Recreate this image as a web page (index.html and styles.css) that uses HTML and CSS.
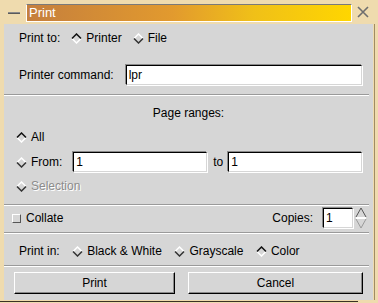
FILE: index.html
```html
<!DOCTYPE html>
<html lang="en">
<head>
    <meta charset="UTF-8">
    <title>Print</title>
    <link rel="stylesheet" href="styles.css">
</head>
<body>
    <div class="window">
        <div class="titlebar">
            <span class="min-btn"></span>
            <div class="title">Print</div>
            <svg class="close-btn" width="12" height="12" viewBox="0 0 12 12">
                <path d="M1 1 L11 11 M11 1 L1 11" stroke="#6e6e6e" stroke-width="1.6" fill="none"/>
            </svg>
        </div>

        <div class="content">
            <!-- destination -->
            <div class="sec sec-dest">
                <div class="row row-radios">
                    <span class="label">Print to:</span>
                    <span class="radio">
                        <svg class="dia" width="11" height="11" viewBox="0 0 11 11"><polyline points="1,5.5 5.5,10 10,5.5" stroke="#fff" stroke-width="1.5" fill="none"/><polyline points="1,5.5 5.5,1 10,5.5" stroke="#111" stroke-width="1.5" fill="none"/></svg>
                        Printer
                    </span>
                    <span class="radio">
                        <svg class="dia" width="11" height="11" viewBox="0 0 11 11"><polyline points="1,5.5 5.5,1 10,5.5" stroke="#fff" stroke-width="1.5" fill="none"/><polyline points="1,5.5 5.5,10 10,5.5" stroke="#333" stroke-width="1.5" fill="none"/></svg>
                        File
                    </span>
                </div>
                <div class="row row-cmd">
                    <span class="label">Printer command:</span>
                    <div class="entry grow">lpr</div>
                </div>
            </div>
            <div class="sep"></div>

            <!-- page ranges -->
            <div class="sec sec-range">
                <div class="row row-center">Page ranges:</div>
                <div class="row row-all">
                    <span class="radio">
                        <svg class="dia" width="11" height="11" viewBox="0 0 11 11"><polyline points="1,5.5 5.5,10 10,5.5" stroke="#fff" stroke-width="1.5" fill="none"/><polyline points="1,5.5 5.5,1 10,5.5" stroke="#111" stroke-width="1.5" fill="none"/></svg>
                        All
                    </span>
                </div>
                <div class="row row-from">
                    <span class="radio">
                        <svg class="dia" width="11" height="11" viewBox="0 0 11 11"><polyline points="1,5.5 5.5,1 10,5.5" stroke="#fff" stroke-width="1.5" fill="none"/><polyline points="1,5.5 5.5,10 10,5.5" stroke="#333" stroke-width="1.5" fill="none"/></svg>
                        From:
                    </span>
                    <div class="entry grow from-entry">1</div>
                    <span class="to-label">to</span>
                    <div class="entry grow">1</div>
                </div>
                <div class="row row-sel">
                    <span class="radio disabled">
                        <svg class="dia" width="11" height="11" viewBox="0 0 11 11"><polyline points="1,5.5 5.5,1 10,5.5" stroke="#fff" stroke-width="1.5" fill="none"/><polyline points="1,5.5 5.5,10 10,5.5" stroke="#333" stroke-width="1.5" fill="none"/></svg>
                        Selection
                    </span>
                </div>
            </div>
            <div class="sep"></div>

            <!-- collate / copies -->
            <div class="sec sec-copies">
                <div class="row row-copies">
                    <span class="check"></span>
                    <span class="check-label">Collate</span>
                    <span class="copies-label">Copies:</span>
                    <div class="entry spin-entry">1</div>
                    <svg class="spin-arrows" width="12" height="22" viewBox="0 0 12 22">
                        <polygon points="6,1 11,10 1,10" fill="#d6d6d6"/>
                        <polyline points="1,10 6,1 11,10" stroke="#555" fill="none"/>
                        <line x1="1" y1="10.5" x2="11" y2="10.5" stroke="#fff"/>
                        <polyline points="1,12 6,21 11,12" stroke="#9a9a9a" fill="none"/>
                        <line x1="1" y1="11.5" x2="11" y2="11.5" stroke="#fff"/>
                    </svg>
                </div>
            </div>
            <div class="sep"></div>

            <!-- colour mode -->
            <div class="sec sec-color">
                <div class="row row-radios wide">
                    <span class="label">Print in:</span>
                    <span class="radio">
                        <svg class="dia" width="11" height="11" viewBox="0 0 11 11"><polyline points="1,5.5 5.5,1 10,5.5" stroke="#fff" stroke-width="1.5" fill="none"/><polyline points="1,5.5 5.5,10 10,5.5" stroke="#333" stroke-width="1.5" fill="none"/></svg>
                        Black &amp; White
                    </span>
                    <span class="radio">
                        <svg class="dia" width="11" height="11" viewBox="0 0 11 11"><polyline points="1,5.5 5.5,1 10,5.5" stroke="#fff" stroke-width="1.5" fill="none"/><polyline points="1,5.5 5.5,10 10,5.5" stroke="#333" stroke-width="1.5" fill="none"/></svg>
                        Grayscale
                    </span>
                    <span class="radio">
                        <svg class="dia" width="11" height="11" viewBox="0 0 11 11"><polyline points="1,5.5 5.5,10 10,5.5" stroke="#fff" stroke-width="1.5" fill="none"/><polyline points="1,5.5 5.5,1 10,5.5" stroke="#111" stroke-width="1.5" fill="none"/></svg>
                        Color
                    </span>
                </div>
            </div>
            <div class="sep"></div>

            <!-- buttons -->
            <div class="sec sec-buttons">
                <div class="btn btn-print">Print</div>
                <div class="btn btn-cancel">Cancel</div>
            </div>
        </div>
        <div class="frame-bottom"></div>
    </div>
</body>
</html>
```

FILE: styles.css
```css
body {
    margin: 0;
    font-family: "Liberation Sans", Arial, sans-serif;
    font-size: 12px;
    color: #000;
    background: #efdbae;
}
.window {
    width: 378px;
    height: 303px;
    background: #efdbae;
    overflow: hidden;
}
.titlebar {
    height: 24px;
    display: flex;
    align-items: flex-start;
}
.min-btn {
    width: 12px;
    height: 1px;
    margin: 12px 0 0 8px;
    background: #8a8a8a;
    border-bottom: 1px solid #5a5a5a;
}
.title {
    width: 326px;
    height: 18px;
    margin: 4px 0 0 6px;
    box-sizing: border-box;
    border-top: 1px solid #7a7a7a;
    border-left: 1px solid #fff;
    border-right: 1px solid #fff;
    border-bottom: 1px solid #fff;
    background: linear-gradient(to right, #c57f3d, #e29a2e 45%, #f0c018 70%, #ffd600);
    color: #fff;
    font-size: 13px;
    padding-left: 2px;
    line-height: 16px;
}
.close-btn {
    margin: 6px 0 0 5px;
}
.content {
    margin-left: 4px;
    width: 369px;
    height: 276px;
    background: #d6d6d6;
    display: flex;
    flex-direction: column;
    box-shadow: 1px 0 0 #efdbae, 2px 0 0 #a08c64;
}
.frame-bottom {
    margin-top: 1px;
    width: 358px;
    height: 1px;
    background: #3a3224;
}
.sec {
    display: flex;
    flex-direction: column;
}
.sep {
    height: 0;
    margin-right: 4px;
    border-top: 1px solid #9a9a9a;
    border-bottom: 1px solid #fff;
}
.row {
    height: 22px;
    display: flex;
    align-items: center;
}
.radio {
    display: flex;
    align-items: center;
    gap: 4px;
}
.disabled {
    color: #8c8c8c;
    text-shadow: 1px 1px 0 #fff;
}
.entry {
    height: 20px;
    margin: 1px 0;
    box-sizing: border-box;
    background: #fff;
    border: 1px solid;
    border-color: #000 #d6d6d6 #d6d6d6 #000;
    box-shadow: -1px -1px 0 #8a8a8a, 1px 1px 0 #fff;
    padding-left: 2px;
    line-height: 18px;
}
.grow {
    flex: 1;
}

/* destination */
.sec-dest {
    padding: 3px 0 8px;
}
.row-radios {
    padding-left: 15px;
    gap: 11px;
}
.row-radios.wide {
    gap: 12.5px;
}
.row-cmd {
    margin-top: 15px;
    padding: 0 11px 0 15px;
    gap: 12px;
}

/* page ranges */
.sec-range {
    padding: 6px 0 7px;
}
.row-center {
    justify-content: center;
}
.row-all {
    margin-top: 2px;
    padding-left: 12px;
}
.row-from {
    margin-top: 3px;
    padding: 0 11px 0 12px;
}
.from-entry {
    margin-left: 11px;
}
.to-label {
    margin: 0 5px 0 6px;
}
.row-sel {
    margin-top: 2px;
    padding-left: 12px;
}

/* copies */
.sec-copies {
    padding: 1px 0 3px;
}
.row-copies {
    padding: 0 6px 0 8px;
}
.check {
    width: 9px;
    height: 9px;
    box-sizing: border-box;
    border: 1px solid;
    border-color: #fff #555 #555 #fff;
}
.check-label {
    margin-left: 5px;
    flex: 1;
}
.spin-entry {
    width: 30px;
    margin-left: 10px;
}
.spin-arrows {
    margin-left: 2px;
}

/* colour */
.sec-color {
    padding: 6px 0 3px;
}

/* buttons */
.sec-buttons {
    flex-direction: row;
    padding: 5px 10px 0 10px;
    gap: 13px;
}
.btn {
    height: 22px;
    box-sizing: border-box;
    border: 1px solid;
    border-color: #fff #000 #000 #fff;
    box-shadow: inset -1px -1px 0 #8a8a8a;
    text-align: center;
    line-height: 20px;
}
.btn-print {
    width: 161px;
}
.btn-cancel {
    flex: 1;
}
```
